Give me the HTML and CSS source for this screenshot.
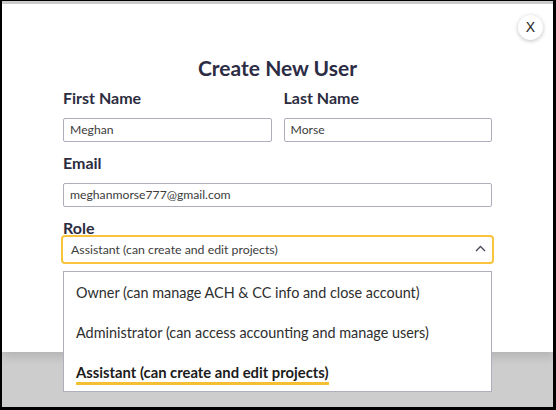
FILE: index.html
```html
<!DOCTYPE html>
<html>
<head>
<meta charset="utf-8">
<link rel="stylesheet" href="styles.css">
</head>
<body>
<div class="backdrop">
  <div class="modal">
    <button class="close" type="button">X</button>
    <h1 class="title">Create New User</h1>
    <div class="row">
      <div class="field">
        <label class="label">First Name</label>
        <div class="input">Meghan</div>
      </div>
      <div class="field">
        <label class="label">Last Name</label>
        <div class="input">Morse</div>
      </div>
    </div>
    <div class="field email">
      <label class="label">Email</label>
      <div class="input">meghanmorse777@gmail.com</div>
    </div>
    <div class="field role">
      <label class="label">Role</label>
      <div class="select">
        <span>Assistant (can create and edit projects)</span>
        <svg class="chev" width="11" height="7" viewBox="0 0 11 7"><path d="M1 6 L5.5 1.5 L10 6" fill="none" stroke="#4a4a5a" stroke-width="1.4"/></svg>
      </div>
      <ul class="menu">
        <li class="opt">Owner (can manage ACH &amp; CC info and close account)</li>
        <li class="opt">Administrator (can access accounting and manage users)</li>
        <li class="opt selected"><span>Assistant (can create and edit projects)</span></li>
      </ul>
    </div>
  </div>
</div>
</body>
</html>
```
FILE: styles.css
```css
* { box-sizing: border-box; }
html, body { margin: 0; padding: 0; }
body {
  width: 556px;
  height: 410px;
  background: #000;
  padding: 1px 3px 3px 2px;
  font-family: "Lato", "Liberation Sans", sans-serif;
  overflow: hidden;
}
.backdrop {
  height: 406px;
  background: #cdcdcd;
  padding-top: 3px;
}
.modal {
  position: relative;
  height: 348px;
  background: #fff;
  padding: 52px 61px 0 61px;
  box-shadow: 0 5px 9px rgba(0,0,0,0.12);
}
.close {
  position: absolute;
  top: 11px;
  right: 10px;
  width: 25px;
  height: 25px;
  border-radius: 50%;
  border: none;
  background: #fff;
  box-shadow: 0 1px 4px rgba(0,0,0,0.25);
  font-family: "Liberation Sans", sans-serif;
  font-size: 14px;
  color: #222;
  padding: 0;
  line-height: 25px;
}
.title {
  margin: 0;
  text-align: center;
  font-size: 21px;
  line-height: 24px;
  font-weight: 700;
  color: #2c2c45;
}
.row {
  display: grid;
  grid-template-columns: 1fr 1fr;
  column-gap: 12px;
}
.field { display: flex; flex-direction: column; }
.label {
  display: block;
  font-size: 16px;
  line-height: 18px;
  font-weight: 700;
  color: #2c2c40;
  margin-top: 9px;
  margin-bottom: 11px;
}
.email .label { margin-top: 12px; }
.input {
  height: 24px;
  border: 1px solid #aeaebc;
  border-radius: 2px;
  padding: 0 6px;
  font-size: 12.2px;
  line-height: 22px;
  color: #3c3c3c;
}
.role { position: relative; }
.role .label { margin-top: 12px; margin-bottom: -2px; }
.select {
  margin: 0 -2px;
  height: 29px;
  border: 2px solid #f8c43e;
  border-radius: 4px;
  display: flex;
  align-items: center;
  justify-content: space-between;
  padding: 0 6px 0 8px;
  font-size: 12.3px;
  color: #3c3c3c;
}
.chev { margin-top: -2px; }
.menu {
  position: absolute;
  left: 0;
  right: 0;
  top: 64px;
  height: 121px;
  margin: 0;
  padding: 11px 0 0 12px;
  list-style: none;
  background: #fff;
  border: 1px solid #aeaebc;
  z-index: 2;
}
.opt {
  font-size: 14.4px;
  line-height: 20px;
  height: 40px;
  color: #2e2e2e;
}
.selected span {
  font-weight: 700;
  font-size: 14.8px;
  color: #1b1b1b;
  display: inline-block;
  border-bottom: 3px solid #f5bf33;
  line-height: 19px;
}
```
